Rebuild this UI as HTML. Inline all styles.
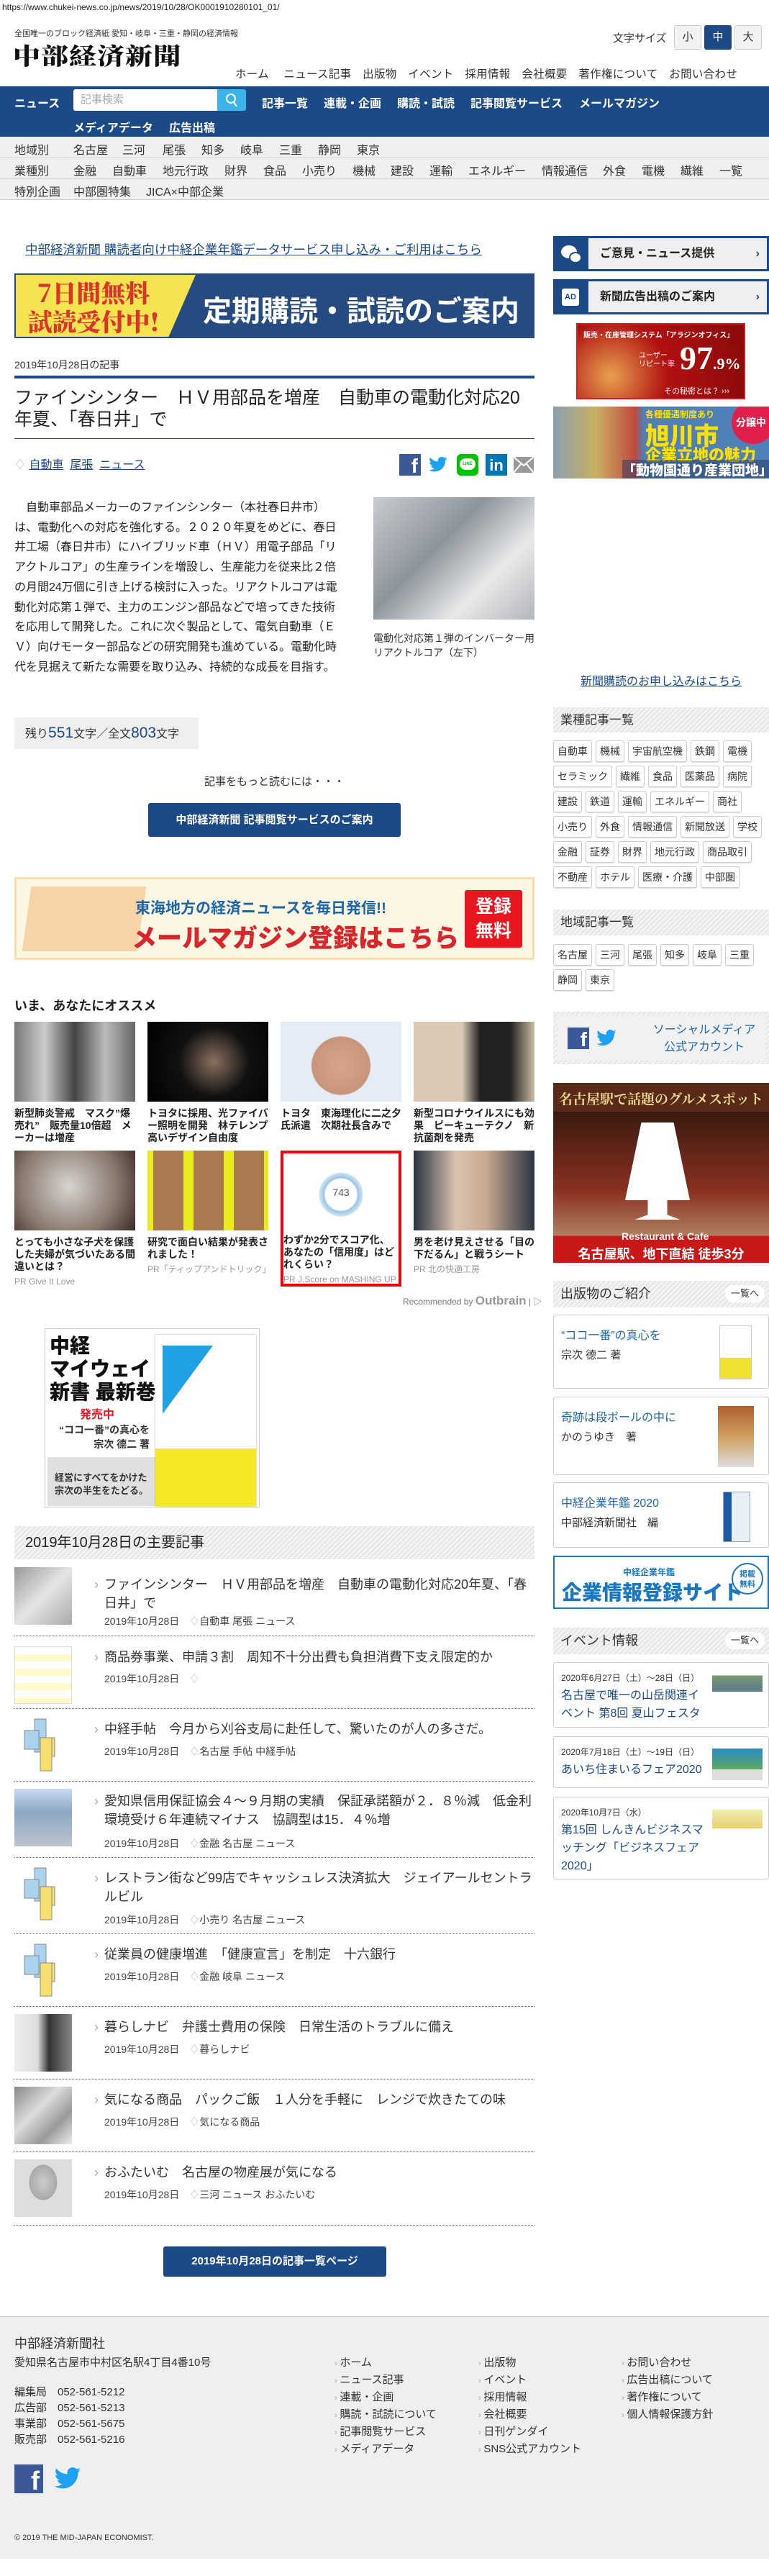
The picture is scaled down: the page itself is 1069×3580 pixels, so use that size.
<!DOCTYPE html>
<html><head><meta charset="utf-8">
<style>
*{margin:0;padding:0;box-sizing:border-box}
body{width:1069px;height:3580px;position:relative;background:#fff;font-family:"Liberation Sans","Noto Sans CJK JP",sans-serif;color:#333;overflow:hidden}
.a{position:absolute}
a{color:#1d4a86}
.bluebar{background:#1b4a86}
.gnav span{position:absolute;font-size:16px;color:#333}
.wl{color:#fff;font-size:16px;font-weight:bold;position:absolute}
.stripe{background:repeating-linear-gradient(135deg,#e6e6e6 0 2px,#f3f3f3 2px 5px)}
.tag{display:inline-block;border:1px solid #ccc;border-radius:3px;height:30px;line-height:28px;padding:0 5px;font-size:14px;margin:0 5px 5px 0;background:#fff;box-shadow:0 1px 1px #ddd}
.rec{position:absolute;width:168px;font-size:14px;font-weight:bold;line-height:17px;color:#222}
.rec .im{height:111px;margin-bottom:8px}
.rec .pr{font-weight:normal;color:#999;font-size:12px;margin-top:4px}
.item .th{position:absolute;left:20px;width:80px;height:80px}
.item .t{position:absolute;left:145px;width:600px;font-size:18px;line-height:26px;color:#333}
.item .t:before{content:"›";position:absolute;left:-14px;color:#aaa}
.item .d{position:absolute;left:145px;font-size:14px;color:#444}
.dot{position:absolute;left:20px;width:723px;border-top:1px dotted #666}
.card{position:absolute;left:769px;width:300px;border:1px solid #ccc;border-radius:3px;background:#fff}
.ft span{position:absolute;font-size:15px;color:#333}
.ft span:before{content:"› ";color:#aaa;font-size:12px}
</style></head><body>

<div class="a" style="left:3px;top:3px;font-size:12px;color:#222">https://www.chukei-news.co.jp/news/2019/10/28/OK0001910280101_01/</div>
<div class="a" style="left:20px;top:38px;font-size:11px;color:#333">全国唯一のブロック経済紙 愛知・岐阜・三重・静岡の経済情報</div>
<div class="a" style="left:18px;top:52px;font-size:38px;font-weight:900;font-family:'Noto Serif CJK SC','Noto Sans CJK JP',serif;color:#111;letter-spacing:1px;transform:scaleY(.85);transform-origin:top left">中部経済新聞</div>
<div class="a" style="left:852px;top:42px;font-size:15px">文字サイズ</div>
<div class="a" style="left:937px;top:35px;width:38px;height:34px;border:1px solid #ccc;background:#f2f2f2;text-align:center;line-height:32px;font-size:15px;border-radius:3px">小</div>
<div class="a" style="left:979px;top:35px;width:38px;height:34px;background:#1b4a86;color:#fff;text-align:center;line-height:34px;font-size:15px;border-radius:3px">中</div>
<div class="a" style="left:1021px;top:35px;width:38px;height:34px;border:1px solid #ccc;background:#f2f2f2;text-align:center;line-height:32px;font-size:15px;border-radius:3px">大</div>
<div class="a" style="left:327px;top:91px;font-size:15.5px;white-space:nowrap;letter-spacing:.3px">ホーム　 ニュース記事　出版物　イベント　採用情報　会社概要　著作権について　お問い合わせ</div>

<div class="a bluebar" style="left:0;top:120px;width:1069px;height:70px"></div>
<div class="wl" style="left:20px;top:130px">ニュース</div>
<div class="a" style="left:102px;top:124px;width:200px;height:30px;background:#fff;border-radius:3px 0 0 3px;color:#aaa;font-size:15px;line-height:30px;padding-left:10px">記事検索</div>
<div class="a" style="left:302px;top:124px;width:40px;height:30px;background:#3db4e8;border-radius:0 3px 3px 0"><svg width="40" height="30"><circle cx="19" cy="13" r="6" fill="none" stroke="#fff" stroke-width="2"/><line x1="23" y1="18" x2="27" y2="24" stroke="#fff" stroke-width="2"/></svg></div>
<div class="wl" style="left:364px;top:130px">記事一覧</div>
<div class="wl" style="left:450px;top:130px">連載・企画</div>
<div class="wl" style="left:552px;top:130px">購読・試読</div>
<div class="wl" style="left:654px;top:130px">記事閲覧サービス</div>
<div class="wl" style="left:805px;top:130px">メールマガジン</div>
<div class="wl" style="left:102px;top:164px">メディアデータ</div>
<div class="wl" style="left:235px;top:164px">広告出稿</div>

<div class="a" style="left:0;top:190px;width:1069px;height:87px;background:#f0f0f0"></div>
<div class="a" style="left:0;top:219px;width:1069px;border-top:1px solid #ccc"></div>
<div class="a" style="left:0;top:248px;width:1069px;border-top:1px solid #ccc"></div>
<div class="a" style="left:0;top:277px;width:1069px;border-top:1px solid #ccc"></div>
<div class="gnav">
<span style="left:20px;top:195px">地域別</span><span style="left:102px;top:195px">名古屋</span><span style="left:170px;top:195px">三河</span><span style="left:226px;top:195px">尾張</span><span style="left:280px;top:195px">知多</span><span style="left:334px;top:195px">岐阜</span><span style="left:388px;top:195px">三重</span><span style="left:442px;top:195px">静岡</span><span style="left:496px;top:195px">東京</span>
<span style="left:20px;top:224px">業種別</span><span style="left:102px;top:224px">金融</span><span style="left:156px;top:224px">自動車</span><span style="left:226px;top:224px">地元行政</span><span style="left:312px;top:224px">財界</span><span style="left:366px;top:224px">食品</span><span style="left:420px;top:224px">小売り</span><span style="left:490px;top:224px">機械</span><span style="left:543px;top:224px">建設</span><span style="left:597px;top:224px">運輸</span><span style="left:651px;top:224px">エネルギー</span><span style="left:753px;top:224px">情報通信</span><span style="left:838px;top:224px">外食</span><span style="left:892px;top:224px">電機</span><span style="left:946px;top:224px">繊維</span><span style="left:1000px;top:224px">一覧</span>
<span style="left:20px;top:253px">特別企画</span><span style="left:102px;top:253px">中部圏特集</span><span style="left:203px;top:253px">JICA×中部企業</span>
</div>

<div class="a" style="left:35px;top:334px;font-size:17.5px"><a href="#">中部経済新聞 購読者向け中経企業年鑑データサービス申し込み・ご利用はこちら</a></div>
<div class="a" style="left:20px;top:380px;width:723px;height:90px;background:#254b80;overflow:hidden">
 <div class="a" style="left:2px;top:2px;width:250px;height:86px;background:#f6e350;clip-path:polygon(0 0,100% 0,85% 100%,0 100%)"></div>
 <div class="a" style="left:10px;top:6px;font-size:34px;line-height:40px;font-weight:900;color:#d8362c;font-family:'Noto Serif CJK SC',serif;text-align:center;width:200px">7日間無料<br>試読受付中!</div>
 <div class="a" style="left:262px;top:20px;font-size:40px;font-weight:bold;color:#fff;white-space:nowrap">定期購読・試読のご案内</div>
</div>
<div class="a" style="left:20px;top:497px;font-size:14px">2019年10月28日の記事</div>
<div class="a" style="left:20px;top:522px;width:723px;height:4px;background:#1b4a86"></div>
<div class="a" style="left:20px;top:538px;width:723px;font-size:25px;line-height:30px;color:#222">ファインシンター　ＨＶ用部品を増産　自動車の電動化対応20年夏、「春日井」で</div>
<div class="a" style="left:20px;top:609px;width:723px;border-top:1px solid #1b4a86"></div>
<div class="a" style="left:20px;top:632px;font-size:16px"><span style="color:#bbb">♢</span> <a href="#">自動車</a>&nbsp; <a href="#">尾張</a>&nbsp; <a href="#">ニュース</a></div>
<div class="a" style="left:555px;top:631px;width:30px;height:30px;background:#3b5998;color:#fff;font-weight:bold;font-size:28px;text-align:right;padding-right:4px;line-height:34px">f</div>
<svg class="a" style="left:594px;top:632px" width="30" height="28" viewBox="0 0 24 24"><path fill="#1da1f2" d="M23 4.6c-.8.4-1.7.6-2.6.7.9-.6 1.6-1.4 2-2.5-.9.5-1.9.9-2.9 1.1A4.5 4.5 0 0 0 11.8 8 12.8 12.8 0 0 1 2.5 3.2a4.5 4.5 0 0 0 1.4 6c-.7 0-1.4-.2-2-.6 0 2.2 1.6 4 3.6 4.4-.7.2-1.4.2-2 .1.6 1.8 2.200 3.1 4.2 3.1A9 9 0 0 1 1 18.1 12.8 12.8 0 0 0 7.9 20c8.3 0 12.8-6.9 12.8-12.8v-.6c.9-.6 1.6-1.4 2.3-2z"/></svg>
<div class="a" style="left:635px;top:631px;width:30px;height:30px;background:#00c300;border-radius:6px"><div style="margin:6px 4px;height:16px;background:#fff;border-radius:8px;font-size:6px;color:#00c300;text-align:center;line-height:16px;font-weight:bold">LINE</div></div>
<div class="a" style="left:675px;top:631px;width:30px;height:30px;background:#0077b5;color:#fff;font-weight:bold;font-size:22px;text-align:center;line-height:32px">in</div>
<svg class="a" style="left:713px;top:634px" width="30" height="24"><rect x="1" y="1" width="28" height="22" fill="#999"/><path d="M1 1 15 13 29 1M1 23 11 11M29 23 19 11" stroke="#fff" stroke-width="2" fill="none"/></svg>

<div class="a" style="left:20px;top:692px;width:450px;font-size:16px;line-height:27.7px;color:#222">　自動車部品メーカーのファインシンター（本社春日井市）は、電動化への対応を強化する。２０２０年夏をめどに、春日井工場（春日井市）にハイブリッド車（ＨＶ）用電子部品「リアクトルコア」の生産ラインを増設し、生産能力を従来比２倍の月間24万個に引き上げる検討に入った。リアクトルコアは電動化対応第１弾で、主力のエンジン部品などで培ってきた技術を応用して開発した。これに次ぐ製品として、電気自動車（ＥＶ）向けモーター部品などの研究開発も進めている。電動化時代を見据えて新たな需要を取り込み、持続的な成長を目指す。</div>
<div class="a" style="left:519px;top:691px;width:224px;height:170px;background:linear-gradient(135deg,#c9ccd0,#8d949b 40%,#e8e9ea 70%,#b3b6ba)"></div>
<div class="a" style="left:519px;top:877px;width:230px;font-size:14px;line-height:20px">電動化対応第１弾のインバーター用リアクトルコア（左下）</div>

<div class="a" style="left:20px;top:997px;width:256px;height:44px;background:#efefef;border-radius:3px;font-size:16px;line-height:44px;padding-left:15px">残り<span style="color:#1b4a86;font-size:21px">551</span>文字／全文<span style="color:#1b4a86;font-size:21px">803</span>文字</div>
<div class="a" style="left:20px;top:1075px;width:723px;text-align:center;font-size:15px">記事をもっと読むには・・・</div>
<div class="a" style="left:206px;top:1116px;width:351px;height:47px;background:#1b4a86;border-radius:3px;color:#fff;font-size:15px;font-weight:bold;text-align:center;line-height:47px">中部経済新聞 記事閲覧サービスのご案内</div>
<div class="a" style="left:20px;top:1219px;width:723px;height:115px;background:#fdf6e3;border:3px solid #f6dfb0;overflow:hidden">
 <div class="a" style="left:14px;top:10px;width:160px;height:90px;background:#f7d4a8;transform:skewX(-8deg)"></div>
 <div class="a" style="left:165px;top:24px;font-size:21px;font-weight:bold;color:#1d66a8">東海地方の経済ニュースを毎日発信!!</div>
 <div class="a" style="left:160px;top:54px;font-size:35px;font-weight:900;color:#d8262c">メールマガジン登録はこちら</div>
 <div class="a" style="left:623px;top:15px;width:80px;height:80px;background:#e8171f;color:#fff;font-size:25px;font-weight:bold;text-align:center;line-height:34px;padding-top:6px;border-radius:3px">登録<br>無料</div>
</div>

<div class="a" style="left:20px;top:1384px;font-size:18px;font-weight:bold;color:#222">いま、あなたにオススメ</div>
<div class="rec" style="left:20px;top:1420px"><div class="im" style="background:linear-gradient(90deg,#777,#ccc,#444,#bbb,#666)"></div>新型肺炎警戒　マスク”爆売れ”　販売量10倍超　メーカーは増産</div>
<div class="rec" style="left:205px;top:1420px"><div class="im" style="background:radial-gradient(circle at 55% 50%,#8a7060,#111 45%,#000)"></div>トヨタに採用、光ファイバー照明を開発　林テレンプ　高いデザイン自由度</div>
<div class="rec" style="left:390px;top:1420px"><div class="im" style="background:radial-gradient(ellipse 40% 60% at 50% 55%,#d6a68a,#c9957a 60%,#e4edf5 62%)"></div>トヨタ　東海理化に二之夕氏派遣　次期社長含みで</div>
<div class="rec" style="left:575px;top:1420px"><div class="im" style="background:linear-gradient(90deg,#d9c9b5 40%,#222 55%,#222 80%,#cdbba5)"></div>新型コロナウイルスにも効果　ピーキューテクノ　新抗菌剤を発売</div>
<div class="rec" style="left:20px;top:1599px"><div class="im" style="background:radial-gradient(circle at 45% 45%,#d8d4d0,#8a7a70 60%,#3a2a25)"></div>とっても小さな子犬を保護した夫婦が気づいたある間違いとは？<div class="pr">PR Give It Love</div></div>
<div class="rec" style="left:205px;top:1599px"><div class="im" style="background:repeating-linear-gradient(90deg,#e8ec1a 0 8px,#a97a52 8px 50px,#e8ec1a 50px 56px)"></div>研究で面白い結果が発表されました！<div class="pr">PR「ティップアンドトリック」</div></div>
<div class="a" style="left:390px;top:1599px;width:168px;height:189px;border:4px solid #e8050f"></div>
<div class="rec" style="left:394px;top:1603px;width:160px"><div class="im" style="height:104px;background:radial-gradient(circle at 50% 55%,#fff 22%,#9cc6e6 24%,#c9e0ef 30%,#fff 32%);font-weight:normal;font-size:14px;text-align:center;padding-top:46px;color:#555">743</div>わずか2分でスコア化、あなたの「信用度」はどれくらい？<div class="pr">PR J.Score on MASHING UP</div></div>
<div class="rec" style="left:575px;top:1599px"><div class="im" style="background:linear-gradient(90deg,#2a3240,#d9c3b0 35%,#c9a890 60%,#2b3444)"></div>男を老け見えさせる「目の下だるん」と戦うシート<div class="pr">PR 北の快適工房</div></div>
<div class="a" style="left:560px;top:1798px;font-size:12px;color:#777">Recommended by <b style="font-size:17px;color:#999">Outbrain</b> | ▷</div>

<div class="a" style="left:62px;top:1846px;width:299px;height:249px;border:1px solid #ccc;background:#fff">
 <div class="a" style="left:6px;top:8px;font-size:28px;font-weight:900;line-height:32px;color:#111">中経<br>マイウェイ<br>新書 最新巻</div>
 <div class="a" style="left:48px;top:105px;font-size:16px;font-weight:bold;color:#e51b24">発売中</div>
 <div class="a" style="left:15px;top:130px;font-size:14px;font-weight:bold;line-height:20px;text-align:right;width:130px">“ココ一番”の真心を<br>宗次 德二 著</div>
 <div class="a" style="left:3px;top:178px;width:150px;height:68px;background:#e0e0e0;font-size:13px;font-weight:bold;padding:20px 0 0 10px;line-height:18px">経営にすべてをかけた<br>宗次の半生をたどる。</div>
 <div class="a" style="left:153px;top:8px;width:140px;height:238px;background:#fff;box-shadow:0 0 2px #999">
  <div style="width:0;height:0;border-top:95px solid #1fa2e5;border-right:70px solid transparent;margin:15px 0 0 10px"></div>
  <div class="a" style="left:0;bottom:0;width:140px;height:80px;background:#f7e827"></div>
 </div>
</div>

<div class="a stripe" style="left:20px;top:2121px;width:723px;height:46px;font-size:20px;line-height:46px;padding-left:15px;color:#222">2019年10月28日の主要記事</div>

<div class="item">
<div class="th" style="top:2178px;background:linear-gradient(135deg,#999,#e5e5e5 50%,#aaa)"></div>
<div class="t" style="top:2189px">ファインシンター　ＨＶ用部品を増産　自動車の電動化対応20年夏、「春日井」で</div>
<div class="d" style="top:2243px">2019年10月28日　<span style="color:#bbb">♢</span>自動車 尾張 ニュース</div>
<div class="dot" style="top:2273px"></div>

<div class="th" style="top:2288px;background:repeating-linear-gradient(180deg,#fff 0 10px,#fff9cc 10px 20px);border:1px solid #ddd"></div>
<div class="t" style="top:2290px">商品券事業、申請３割　周知不十分出費も負担消費下支え限定的か</div>
<div class="d" style="top:2323px">2019年10月28日　<span style="color:#bbb">♢</span></div>
<div class="dot" style="top:2374px"></div>

<div class="th" style="top:2385px"><svg width="80" height="80"><rect x="28" y="4" width="16" height="46" fill="#a9d3ee" stroke="#888"/><rect x="14" y="20" width="20" height="26" fill="#a9d3ee" stroke="#888"/><rect x="36" y="30" width="20" height="26" fill="#f7df70" stroke="#888"/><rect x="36" y="30" width="16" height="46" fill="#f7df70" stroke="#888"/></svg></div>
<div class="t" style="top:2390px">中経手帖　今月から刈谷支局に赴任して、驚いたのが人の多さだ。</div>
<div class="d" style="top:2424px">2019年10月28日　<span style="color:#bbb">♢</span>名古屋 手帖 中経手帖</div>
<div class="dot" style="top:2475px"></div>

<div class="th" style="top:2486px;background:linear-gradient(180deg,#c9daf0,#8ea6c4 40%,#bcc4cf)"></div>
<div class="t" style="top:2490px">愛知県信用保証協会４～９月期の実績　保証承諾額が２．８％減　低金利環境受け６年連続マイナス　協調型は15．４％増</div>
<div class="d" style="top:2552px">2019年10月28日　<span style="color:#bbb">♢</span>金融 名古屋 ニュース</div>
<div class="dot" style="top:2581px"></div>

<div class="th" style="top:2592px"><svg width="80" height="80"><rect x="28" y="4" width="16" height="46" fill="#a9d3ee" stroke="#888"/><rect x="14" y="20" width="20" height="26" fill="#a9d3ee" stroke="#888"/><rect x="36" y="30" width="20" height="26" fill="#f7df70" stroke="#888"/><rect x="36" y="30" width="16" height="46" fill="#f7df70" stroke="#888"/></svg></div>
<div class="t" style="top:2597px">レストラン街など99店でキャッシュレス決済拡大　ジェイアールセントラルビル</div>
<div class="d" style="top:2658px">2019年10月28日　<span style="color:#bbb">♢</span>小売り 名古屋 ニュース</div>
<div class="dot" style="top:2687px"></div>

<div class="th" style="top:2698px"><svg width="80" height="80"><rect x="28" y="4" width="16" height="46" fill="#a9d3ee" stroke="#888"/><rect x="14" y="20" width="20" height="26" fill="#a9d3ee" stroke="#888"/><rect x="36" y="30" width="20" height="26" fill="#f7df70" stroke="#888"/><rect x="36" y="30" width="16" height="46" fill="#f7df70" stroke="#888"/></svg></div>
<div class="t" style="top:2703px">従業員の健康増進　「健康宣言」を制定　十六銀行</div>
<div class="d" style="top:2737px">2019年10月28日　<span style="color:#bbb">♢</span>金融 岐阜 ニュース</div>
<div class="dot" style="top:2788px"></div>

<div class="th" style="top:2799px;background:linear-gradient(90deg,#eee,#ddd 40%,#333 60%,#888)"></div>
<div class="t" style="top:2804px">暮らしナビ　弁護士費用の保険　日常生活のトラブルに備え</div>
<div class="d" style="top:2838px">2019年10月28日　<span style="color:#bbb">♢</span>暮らしナビ</div>
<div class="dot" style="top:2889px"></div>

<div class="th" style="top:2900px;background:linear-gradient(135deg,#888,#ddd 40%,#999 70%,#eee)"></div>
<div class="t" style="top:2905px">気になる商品　パックご飯　１人分を手軽に　レンジで炊きたての味</div>
<div class="d" style="top:2939px">2019年10月28日　<span style="color:#bbb">♢</span>気になる商品</div>
<div class="dot" style="top:2990px"></div>

<div class="th" style="top:3001px;background:radial-gradient(ellipse 30% 38% at 50% 40%,#ccc,#aaa 80%,#ddd 82%),#ddd"></div>
<div class="t" style="top:3006px">おふたいむ　名古屋の物産展が気になる</div>
<div class="d" style="top:3040px">2019年10月28日　<span style="color:#bbb">♢</span>三河 ニュース おふたいむ</div>
<div class="dot" style="top:3092px"></div>
</div>

<div class="a" style="left:227px;top:3122px;width:310px;height:42px;background:#1b4a86;border-radius:3px;color:#fff;font-size:15px;font-weight:bold;text-align:center;line-height:42px">2019年10月28日の記事一覧ページ</div>

<!-- sidebar -->
<div class="a" style="left:769px;top:328px;width:300px;height:49px;background:#1b4a86"><div class="a" style="left:49px;top:3px;width:248px;height:43px;background:#efefef;font-size:16px;font-weight:bold;line-height:43px;padding-left:16px;color:#222">ご意見・ニュース提供<span style="position:absolute;right:10px;color:#1b4a86">›</span></div><svg class="a" style="left:10px;top:10px" width="30" height="30"><ellipse cx="12" cy="12" rx="11" ry="9" fill="#fff"/><ellipse cx="21" cy="20" rx="8" ry="7" fill="#fff" stroke="#1b4a86" stroke-width="2"/></svg></div>
<div class="a" style="left:769px;top:388px;width:300px;height:49px;background:#1b4a86"><div class="a" style="left:49px;top:3px;width:248px;height:43px;background:#efefef;font-size:16px;font-weight:bold;line-height:43px;padding-left:16px;color:#222">新聞広告出稿のご案内<span style="position:absolute;right:10px;color:#1b4a86">›</span></div><div class="a" style="left:12px;top:13px;width:24px;height:24px;background:#fff;border-radius:3px;color:#1b4a86;font-size:11px;font-weight:bold;text-align:center;line-height:24px">AD</div></div>
<div class="a" style="left:801px;top:449px;width:235px;height:106px;background:radial-gradient(circle at 20% 70%,#e8a050,#b01010 40%,#8a0a0a);border:2px solid #c22;color:#fff">
 <div style="font-size:10px;padding:6px 8px;font-weight:bold;white-space:nowrap">販売・在庫管理システム「アラジンオフィス」</div>
 <div class="a" style="left:85px;top:38px;font-size:10px;line-height:12px">ユーザー<br>リピート率</div>
 <div class="a" style="left:142px;top:22px;font-size:46px;font-weight:bold;font-family:'Liberation Serif',serif;line-height:50px">97<span style="font-size:22px">.9%</span></div>
 <div class="a" style="left:120px;top:84px;font-size:11px">その秘密とは？ ›››</div>
</div>
<div class="a" style="left:769px;top:565px;width:300px;height:100px;background:linear-gradient(90deg,#8aa0b0,#c8b060 20%,#c04840 38%,#4f80b8 42%);overflow:hidden">
 <div class="a" style="left:128px;top:2px;font-size:12px;font-weight:bold;color:#ffe000">各種優遇制度あり</div>
 <div class="a" style="left:128px;top:14px;font-size:34px;font-weight:900;color:#ffe000">旭川市</div>
 <div class="a" style="left:128px;top:50px;font-size:22px;font-weight:900;color:#ffe000">企業立地の魅力</div>
 <div class="a" style="left:96px;top:74px;font-size:19px;font-weight:900;color:#fff;background:rgba(40,60,100,.5)">「動物園通り産業団地」</div>
 <div class="a" style="left:248px;top:-8px;width:60px;height:60px;border-radius:50%;background:#e0204a;color:#fff;font-size:14px;font-weight:bold;padding:20px 0 0 6px">分譲中</div>
</div>
<div class="a" style="left:807px;top:933px;font-size:16px"><a href="#">新聞購読のお申し込みはこちら</a></div>

<div class="a stripe" style="left:769px;top:983px;width:300px;height:35px;font-size:17px;line-height:35px;padding-left:10px">業種記事一覧</div>
<div class="a" style="left:769px;top:1029px;width:300px">
<span class="tag">自動車</span><span class="tag">機械</span><span class="tag">宇宙航空機</span><span class="tag">鉄鋼</span><span class="tag">電機</span><br>
<span class="tag">セラミック</span><span class="tag">繊維</span><span class="tag">食品</span><span class="tag">医薬品</span><span class="tag">病院</span><br>
<span class="tag">建設</span><span class="tag">鉄道</span><span class="tag">運輸</span><span class="tag">エネルギー</span><span class="tag">商社</span><br>
<span class="tag">小売り</span><span class="tag">外食</span><span class="tag">情報通信</span><span class="tag">新聞放送</span><span class="tag">学校</span><br>
<span class="tag">金融</span><span class="tag">証券</span><span class="tag">財界</span><span class="tag">地元行政</span><span class="tag">商品取引</span><br>
<span class="tag">不動産</span><span class="tag">ホテル</span><span class="tag">医療・介護</span><span class="tag">中部圏</span>
</div>
<div class="a stripe" style="left:769px;top:1264px;width:300px;height:36px;font-size:17px;line-height:36px;padding-left:10px">地域記事一覧</div>
<div class="a" style="left:769px;top:1312px;width:300px">
<span class="tag">名古屋</span><span class="tag">三河</span><span class="tag">尾張</span><span class="tag">知多</span><span class="tag">岐阜</span><span class="tag">三重</span><br>
<span class="tag">静岡</span><span class="tag">東京</span>
</div>
<div class="a stripe" style="left:769px;top:1406px;width:300px;height:73px">
 <div class="a" style="left:5px;top:5px;width:290px;height:63px;background:#f1f1f1"></div>
 <div class="a" style="left:20px;top:22px;width:30px;height:30px;background:#3b5998;color:#fff;font-weight:bold;font-size:28px;text-align:right;padding-right:3px;line-height:34px">f</div>
 <svg class="a" style="left:58px;top:22px" width="32" height="30" viewBox="0 0 24 24"><path fill="#1da1f2" d="M23 4.6c-.8.4-1.7.6-2.6.7.9-.6 1.6-1.4 2-2.5-.9.5-1.9.9-2.9 1.1A4.5 4.5 0 0 0 11.8 8 12.8 12.8 0 0 1 2.5 3.2a4.5 4.5 0 0 0 1.4 6c-.7 0-1.4-.2-2-.6 0 2.2 1.6 4 3.6 4.4-.7.2-1.4.2-2 .1.6 1.8 2.2 3.1 4.2 3.1A9 9 0 0 1 1 18.1 12.8 12.8 0 0 0 7.9 20c8.3 0 12.8-6.9 12.8-12.8v-.6c.9-.6 1.6-1.4 2.3-2z"/></svg>
 <div class="a" style="left:125px;top:14px;width:170px;font-size:16px;line-height:24px;color:#1d66a8;text-align:center">ソーシャルメディア<br>公式アカウント</div>
</div>
<div class="a" style="left:769px;top:1505px;width:300px;height:250px;background:linear-gradient(180deg,#5a2a18 0 40px,#3a1a10 40px,#8a3020 60%,#b08060 85%,#c81818 85%);overflow:hidden">
 <div class="a" style="left:8px;top:8px;font-size:19px;color:#f0d890;font-family:'Noto Serif CJK SC',serif;font-weight:bold;white-space:nowrap">名古屋駅で話題のグルメスポット</div>
 <div class="a" style="left:100px;top:55px;width:90px;height:135px;background:#fff;clip-path:polygon(25% 0,75% 0,100% 80%,65% 80%,65% 95%,85% 100%,15% 100%,35% 95%,35% 80%,0 80%)"></div>
 <div class="a" style="left:95px;top:205px;font-size:14px;color:#fff;font-weight:bold">Restaurant &amp; Cafe</div>
 <div class="a" style="left:0;top:224px;width:300px;text-align:center;font-size:18px;color:#fff;font-weight:bold">名古屋駅、地下直結 徒歩3分</div>
</div>

<div class="a stripe" style="left:769px;top:1780px;width:300px;height:37px;font-size:18px;line-height:37px;padding-left:10px">出版物のご紹介<span style="position:absolute;right:6px;top:6px;background:#fff;border-radius:12px;font-size:13px;line-height:24px;padding:0 8px">一覧へ</span></div>
<div class="card" style="top:1827px;height:103px"><div class="a" style="left:10px;top:14px;font-size:16px;color:#1d66a8">“ココ一番”の真心を</div><div class="a" style="left:10px;top:44px;font-size:15px">宗次 德二 著</div><div class="a" style="left:230px;top:14px;width:45px;height:75px;background:linear-gradient(180deg,#fff 60%,#f0e030 60%);border:1px solid #ccc"></div></div>
<div class="card" style="top:1941px;height:109px"><div class="a" style="left:10px;top:14px;font-size:16px;color:#1d66a8">奇跡は段ボールの中に</div><div class="a" style="left:10px;top:44px;font-size:15px">かのうゆき　著</div><div class="a" style="left:228px;top:12px;width:50px;height:85px;background:linear-gradient(180deg,#b06030,#d0a060 50%,#ddd)"></div></div>
<div class="card" style="top:2060px;height:91px"><div class="a" style="left:10px;top:14px;font-size:16px;color:#1d66a8">中経企業年鑑 2020</div><div class="a" style="left:10px;top:44px;font-size:15px">中部経済新聞社　編</div><div class="a" style="left:235px;top:12px;width:38px;height:70px;background:linear-gradient(90deg,#1b5aa8 30%,#e8eef6 30%);border:1px solid #9ab"></div></div>
<div class="a" style="left:769px;top:2162px;width:300px;height:74px;border:2px solid #1b78c0;background:#fff">
 <div class="a" style="left:95px;top:12px;font-size:12px;font-weight:bold;color:#1b78c0">中経企業年鑑</div>
 <div class="a" style="left:10px;top:28px;font-size:28px;font-weight:900;color:#1b78c0">企業情報登録サイト</div>
 <div class="a" style="left:246px;top:8px;width:44px;height:44px;border:2px solid #1b78c0;border-radius:50%;font-size:11px;font-weight:bold;color:#1b78c0;text-align:center;line-height:14px;padding-top:7px">掲載<br>無料</div>
</div>
<div class="a stripe" style="left:769px;top:2262px;width:300px;height:37px;font-size:18px;line-height:37px;padding-left:10px">イベント情報<span style="position:absolute;right:6px;top:6px;background:#fff;border-radius:12px;font-size:13px;line-height:24px;padding:0 8px">一覧へ</span></div>
<div class="card" style="top:2310px;height:91px"><div class="a" style="left:10px;top:12px;font-size:12px">2020年6月27日（土）～28日（日）</div><div class="a" style="left:10px;top:33px;width:200px;font-size:16px;line-height:25px;color:#1d4a86">名古屋で唯一の山岳関連イベント 第8回 夏山フェスタ</div><div class="a" style="left:220px;top:10px;width:70px;height:50px;background:linear-gradient(180deg,#fff 15%,#7a9a70 15%,#5a7a8a 60%,#fff 60%)"></div></div>
<div class="card" style="top:2413px;height:72px"><div class="a" style="left:10px;top:12px;font-size:12px">2020年7月18日（土）～19日（日）</div><div class="a" style="left:10px;top:33px;font-size:16px;line-height:25px;color:#1d4a86">あいち住まいるフェア2020</div><div class="a" style="left:220px;top:10px;width:70px;height:50px;background:linear-gradient(180deg,#fff 12%,#2a8ac8 12%,#60a860 70%,#ddd 70%)"></div></div>
<div class="card" style="top:2497px;height:115px"><div class="a" style="left:10px;top:12px;font-size:12px">2020年10月7日（水）</div><div class="a" style="left:10px;top:33px;width:200px;font-size:16px;line-height:25px;color:#1d4a86">第15回 しんきんビジネスマッチング「ビジネスフェア2020」</div><div class="a" style="left:220px;top:10px;width:70px;height:55px;background:linear-gradient(180deg,#fff 12%,#f0f0b0 12%,#e8d070 60%,#fff 60%)"></div></div>

<!-- footer -->
<div class="a" style="left:0;top:3219px;width:1069px;height:337px;background:#efefef;border-top:1px solid #ccc"></div>
<div class="a" style="left:20px;top:3243px;font-size:18px">中部経済新聞社</div>
<div class="a" style="left:20px;top:3272px;font-size:15px">愛知県名古屋市中村区名駅4丁目4番10号</div>
<div class="a" style="left:20px;top:3314px;font-size:15px;line-height:22px">編集局　052-561-5212<br>広告部　052-561-5213<br>事業部　052-561-5675<br>販売部　052-561-5216</div>
<div class="a" style="left:20px;top:3425px;width:40px;height:40px;background:#3b5998;color:#fff;font-weight:bold;font-size:36px;text-align:right;padding-right:5px;line-height:46px">f</div>
<svg class="a" style="left:72px;top:3425px" width="44" height="40" viewBox="0 0 24 24"><path fill="#1da1f2" d="M23 4.6c-.8.4-1.7.6-2.6.7.9-.6 1.6-1.4 2-2.5-.9.5-1.9.9-2.9 1.1A4.5 4.5 0 0 0 11.8 8 12.8 12.8 0 0 1 2.5 3.2a4.5 4.5 0 0 0 1.4 6c-.7 0-1.4-.2-2-.6 0 2.2 1.6 4 3.6 4.4-.7.2-1.4.2-2 .1.6 1.8 2.2 3.1 4.2 3.1A9 9 0 0 1 1 18.1 12.8 12.8 0 0 0 7.9 20c8.3 0 12.8-6.9 12.8-12.8v-.6c.9-.6 1.6-1.4 2.3-2z"/></svg>
<div class="a" style="left:20px;top:3521px;font-size:11px">© 2019 THE MID-JAPAN ECONOMIST.</div>
<div class="ft">
<span style="left:465px;top:3272px">ホーム</span><span style="left:465px;top:3296px">ニュース記事</span><span style="left:465px;top:3320px">連載・企画</span><span style="left:465px;top:3344px">購読・試読について</span><span style="left:465px;top:3368px">記事閲覧サービス</span><span style="left:465px;top:3392px">メディアデータ</span>
<span style="left:665px;top:3272px">出版物</span><span style="left:665px;top:3296px">イベント</span><span style="left:665px;top:3320px">採用情報</span><span style="left:665px;top:3344px">会社概要</span><span style="left:665px;top:3368px">日刊ゲンダイ</span><span style="left:665px;top:3392px">SNS公式アカウント</span>
<span style="left:864px;top:3272px">お問い合わせ</span><span style="left:864px;top:3296px">広告出稿について</span><span style="left:864px;top:3320px">著作権について</span><span style="left:864px;top:3344px">個人情報保護方針</span>
</div>
</body></html>
